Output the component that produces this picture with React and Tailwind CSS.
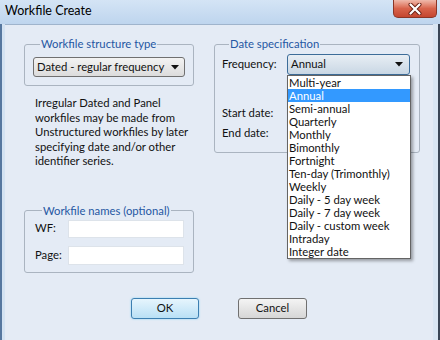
import { useState } from 'react';

const FREQS = [
  'Multi-year',
  'Annual',
  'Semi-annual',
  'Quarterly',
  'Monthly',
  'Bimonthly',
  'Fortnight',
  'Ten-day (Trimonthly)',
  'Weekly',
  'Daily - 5 day week',
  'Daily - 7 day week',
  'Daily - custom week',
  'Intraday',
  'Integer date',
];

function Arrow() {
  return (
    <svg width="8" height="5" viewBox="0 0 8 5">
      <path d="M0 0 H8 L4 4.5 Z" fill="#111" />
    </svg>
  );
}

export default function App() {
  const [freq, setFreq] = useState('Annual');

  return (
    <div className="w-[440px] h-[340px] flex flex-col overflow-hidden whitespace-nowrap bg-[#c4d9ef] text-[11.3px] text-[#111] font-['Lato','Noto_Sans',sans-serif]">
      {/* title bar */}
      <div className="h-[24px] flex justify-between bg-gradient-to-b from-[#d4e4f5] to-[#bed5ee]">
        <span className="pl-[5px] pt-[3px] leading-[16px] text-[12.5px] text-black">Workfile Create</span>
        <button className="mr-[3px] w-[44px] h-[18px] flex items-center justify-center rounded-b-[5px] border border-t-0 border-[#8a3526] bg-gradient-to-b from-[#efb9ab] via-[#d8634b] to-[#c4462f]">
          <svg width="14" height="12" viewBox="0 0 14 12">
            <path d="M2.5 1.5 L11.5 10.5 M11.5 1.5 L2.5 10.5" stroke="#6a2014" strokeWidth="4" strokeLinecap="round" />
            <path d="M2.5 1.5 L11.5 10.5 M11.5 1.5 L2.5 10.5" stroke="#fff" strokeWidth="2.2" strokeLinecap="round" />
          </svg>
        </button>
      </div>

      <div className="flex-1 flex">
        <div className="w-[5px] border-l-2 border-[#56779f] bg-[#d3e2f2]" />

        <div className="flex-1 flex flex-col border-t border-[#9fb4cc] bg-[#e4ebf5] pt-[11px] pl-[19px]">
          <div className="flex gap-[20px]">
            {/* left column */}
            <div className="w-[170px] flex flex-col">
              <fieldset className="border border-[#aab4c0] rounded-[3px] px-[8px] pb-[8px]">
                <legend className="ml-[7px] px-[1px] leading-[16px] text-[#2557a3]">Workfile structure type</legend>
                <div className="mt-[5px] h-[20px] flex items-center justify-between pl-[3px] pr-[5px] border border-[#707070] rounded-[3px] bg-gradient-to-b from-[#f3f3f3] to-[#dcdcdc]">
                  <span>Dated - regular frequency</span>
                  <Arrow />
                </div>
              </fieldset>

              <p className="mt-[10px] pl-[11px] leading-[14.5px]">
                Irregular Dated and Panel
                <br />
                workfiles may be made from
                <br />
                Unstructured workfiles by later
                <br />
                specifying date and/or other
                <br />
                identifier series.
              </p>

              <fieldset className="mt-[34px] border border-[#aab4c0] rounded-[3px] pl-[10px] pr-[9px] pb-[7px]">
                <legend className="ml-[7px] px-[1px] leading-[16px] text-[#2557a3]">Workfile names (optional)</legend>
                <div className="mt-[1px] flex items-center justify-between">
                  <span>WF:</span>
                  <input className="w-[116px] h-[18px] bg-white border border-[#dde3ea] outline-none" />
                </div>
                <div className="mt-[8px] flex items-center justify-between">
                  <span>Page:</span>
                  <input className="w-[116px] h-[19px] bg-white border border-[#dde3ea] outline-none" />
                </div>
              </fieldset>
            </div>

            {/* right column */}
            <div className="w-[206px]">
              <fieldset className="border border-[#aab4c0] rounded-[3px] pl-[7px] pr-[9px] pb-[11px]">
                <legend className="ml-[7px] px-[1px] leading-[16px] text-[#2557a3]">Date specification</legend>
                <div className="mt-[2px] flex items-center justify-between">
                  <span>Frequency:</span>
                  <div className="relative">
                    <div className="w-[123px] h-[21px] flex items-center justify-between pl-[3px] pr-[6px] border border-[#3d6d99] rounded-[3px] bg-gradient-to-b from-[#e8eef4] to-[#c9d7e4]">
                      <span>{freq}</span>
                      <Arrow />
                    </div>
                    <ul className="absolute left-0 top-full z-10 w-[124px] bg-white border border-[#646464] shadow-[2px_2px_3px_rgba(0,0,0,0.35)]">
                      {FREQS.map((f) => (
                        <li
                          key={f}
                          onClick={() => setFreq(f)}
                          className={`h-[13px] leading-[13px] pl-[1px] ${
                            f === freq ? 'bg-[#3399ff] text-white' : ''
                          }`}
                        >
                          {f}
                        </li>
                      ))}
                    </ul>
                  </div>
                </div>
                <div className="mt-[30px] leading-[16px]">Start date:</div>
                <div className="mt-[4px] leading-[16px]">End date:</div>
              </fieldset>
            </div>
          </div>

          <div className="mt-[25px] pr-[19px] flex justify-center gap-[39px]">
            <button className="w-[68px] h-[21px] border border-[#3c7fb1] rounded-[3px] bg-gradient-to-b from-[#e6f5fd] to-[#b9e0f5] shadow-[0_0_2px_#7fd0f5]">
              OK
            </button>
            <button className="w-[69px] h-[21px] border border-[#707070] rounded-[3px] bg-gradient-to-b from-[#f4f4f4] to-[#d6d6d6]">
              Cancel
            </button>
          </div>
        </div>

        <div className="w-[7px] border-r-2 border-[#3a4656] bg-[#d9e6f3]" />
      </div>
    </div>
  );
}
